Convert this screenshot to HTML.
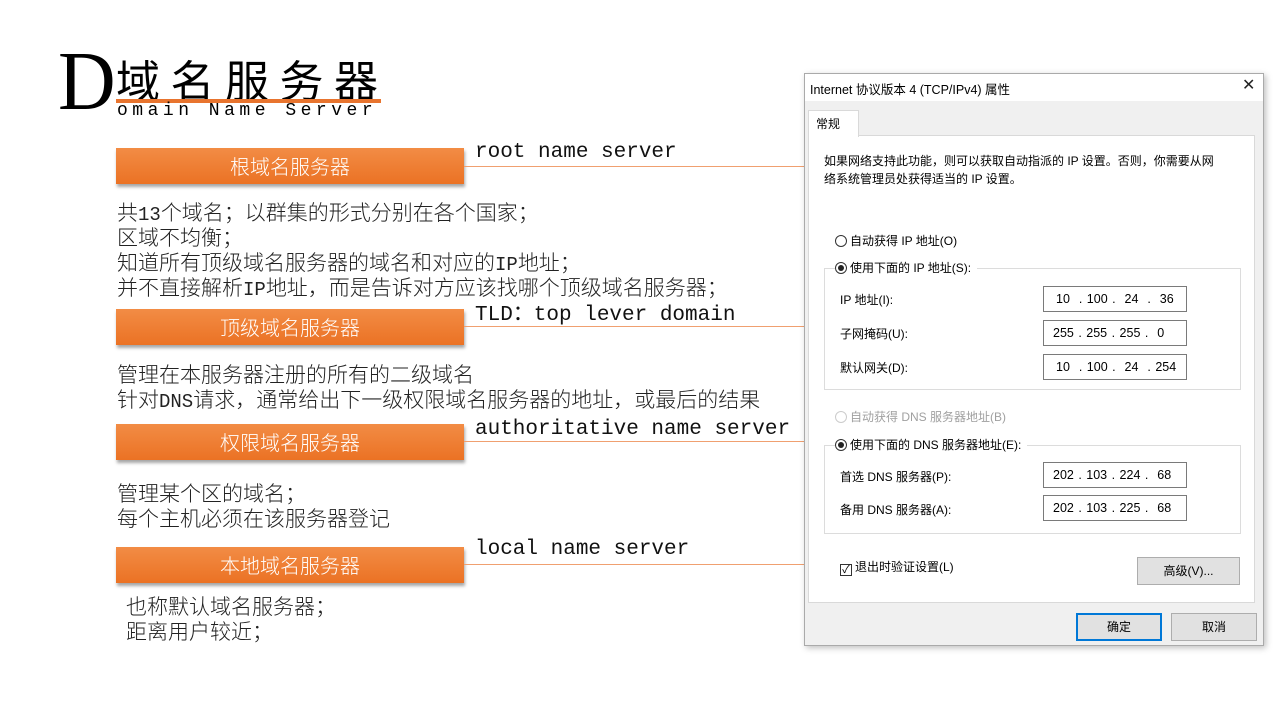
<!DOCTYPE html>
<html><head><meta charset="utf-8"><style>
*{margin:0;padding:0;box-sizing:border-box}
body{width:1280px;height:720px;background:#fff;position:relative;overflow:hidden;font-family:"Liberation Sans","Noto Sans CJK SC",sans-serif}
.a{position:absolute;white-space:nowrap}
.box{position:absolute;left:116px;width:348px;height:36px;background:linear-gradient(#f28c45,#eb7224);color:#fff;font-size:20px;line-height:36px;text-align:center;box-shadow:1px 3px 3px rgba(0,0,0,.35);font-family:"Noto Sans CJK SC",sans-serif;font-weight:300}
.lab{position:absolute;left:475px;font-family:"Liberation Mono","Noto Sans CJK SC",monospace;font-size:21px;line-height:22px;height:22px;color:#111;white-space:nowrap}
.ln{position:absolute;left:464px;width:340px;height:1px;background:#f0a070}
.t{position:absolute;left:117px;font-size:21px;color:#222;font-family:"Noto Sans CJK SC",sans-serif;font-weight:300;white-space:nowrap}
.t div{height:25px;line-height:25px;overflow:visible}
.m{font-family:"Liberation Mono",monospace;font-size:19px;line-height:1}
.d{font-size:12px;color:#000;font-family:"Liberation Sans","Noto Sans CJK SC",sans-serif}
.in{position:absolute;left:1043px;width:144px;height:26px;border:1px solid #7a7a7a;background:#fff;font-size:12.5px;line-height:24px;padding-left:12px;word-spacing:1px}
.rb{display:inline-block;width:12px;height:12px;border:1px solid #333;border-radius:50%;vertical-align:-2px;margin-right:3px;background:#fff;position:relative}
.rb.on::after{content:"";position:absolute;left:2px;top:2px;width:6px;height:6px;border-radius:50%;background:#222}
.gb{position:absolute;border:1px solid #dcdcdc}
.btn{position:absolute;height:28px;background:#e1e1e1;border:1px solid #adadad;font-size:12px;text-align:center;line-height:26px}
</style></head><body>
<div class="a" style="left:58px;top:40px;font-family:'Liberation Serif',serif;font-size:84px;line-height:84px;color:#000;transform:scaleX(0.95);transform-origin:left">D</div>
<div class="a" style="left:116px;top:54px;font-size:44px;line-height:48px;letter-spacing:10.5px;font-family:'Noto Sans CJK SC',sans-serif;color:#000">域名服务器</div>
<div class="a" style="left:116px;top:99px;width:265px;height:4px;background:#e8742e"></div>
<div class="a" style="left:117px;top:101px;font-family:'Liberation Mono',monospace;font-size:18px;letter-spacing:4.5px;color:#000">omain Name Server</div>

<div class="box" style="top:148px">根域名服务器</div>
<div class="lab" style="top:142px">root name server</div>
<div class="ln" style="top:166px"></div>
<div class="t" style="top:200px"><div>共<span class="m">13</span>个域名；以群集的形式分别在各个国家；</div><div>区域不均衡；</div><div>知道所有顶级域名服务器的域名和对应的<span class="m">IP</span>地址；</div><div>并不直接解析<span class="m">IP</span>地址，而是告诉对方应该找哪个顶级域名服务器；</div></div>

<div class="box" style="top:309px">顶级域名服务器</div>
<div class="lab" style="top:305px">TLD：top lever domain</div>
<div class="ln" style="top:326px"></div>
<div class="t" style="top:362px"><div>管理在本服务器注册的所有的二级域名</div><div>针对<span class="m">DNS</span>请求，通常给出下一级权限域名服务器的地址，或最后的结果</div></div>

<div class="box" style="top:424px">权限域名服务器</div>
<div class="lab" style="top:419px">authoritative name server</div>
<div class="ln" style="top:441px"></div>
<div class="t" style="top:481px"><div>管理某个区的域名；</div><div>每个主机必须在该服务器登记</div></div>

<div class="box" style="top:547px">本地域名服务器</div>
<div class="lab" style="top:539px">local name server</div>
<div class="ln" style="top:564px"></div>
<div class="t" style="top:594px;left:126px"><div>也称默认域名服务器；</div><div>距离用户较近；</div></div>

<div class="a" style="left:804px;top:73px;width:460px;height:573px;background:#f0f0f0;border:1px solid #aaa;box-shadow:2px 2px 6px rgba(0,0,0,.25)"></div>
<div class="a" style="left:805px;top:74px;width:458px;height:27px;background:#fff"></div>
<div class="a d" style="left:810px;top:79px;font-size:12.5px">Internet 协议版本 4 (TCP/IPv4) 属性</div>
<div class="a" style="left:1242px;top:77px;font-size:16px;line-height:18px;color:#222">✕</div>
<div class="a" style="left:808px;top:135px;width:447px;height:468px;background:#fff;border:1px solid #d9d9d9"></div>
<div class="a" style="left:808px;top:110px;width:51px;height:27px;background:#fff;border:1px solid #d9d9d9;border-bottom:none"></div>
<div class="a d" style="left:816px;top:115px">常规</div>
<div class="a d" style="left:824px;top:152px;line-height:18px">如果网络支持此功能，则可以获取自动指派的 IP 设置。否则，你需要从网<br>络系统管理员处获得适当的 IP 设置。</div>

<div class="gb" style="left:824px;top:268px;width:417px;height:122px"></div>
<div class="a d" style="left:835px;top:232px"><span class="rb"></span>自动获得 IP 地址(O)</div>
<div class="a d" style="left:835px;top:259px;background:#fff;padding-right:6px"><span class="rb on"></span>使用下面的 IP 地址(S):</div>
<div class="a d" style="left:840px;top:291px">IP 地址(I):</div>
<div class="a d" style="left:840px;top:325px">子网掩码(U):</div>
<div class="a d" style="left:840px;top:359px">默认网关(D):</div>
<div class="in" style="top:286px">10 &nbsp;. 100 . &nbsp;24 &nbsp;. &nbsp;36</div>
<div class="in" style="top:320px;padding-left:9px">255 . 255 . 255 . &nbsp;0</div>
<div class="in" style="top:354px">10 &nbsp;. 100 . &nbsp;24 &nbsp;. 254</div>

<div class="a d" style="left:835px;top:408px;color:#a0a0a0"><span class="rb" style="border-color:#ccc"></span>自动获得 DNS 服务器地址(B)</div>
<div class="gb" style="left:824px;top:445px;width:417px;height:89px"></div>
<div class="a d" style="left:835px;top:436px;background:#fff;padding-right:6px"><span class="rb on"></span>使用下面的 DNS 服务器地址(E):</div>
<div class="a d" style="left:840px;top:468px">首选 DNS 服务器(P):</div>
<div class="a d" style="left:840px;top:501px">备用 DNS 服务器(A):</div>
<div class="in" style="top:462px;padding-left:9px">202 . 103 . 224 . &nbsp;68</div>
<div class="in" style="top:495px;padding-left:9px">202 . 103 . 225 . &nbsp;68</div>

<div class="a d" style="left:840px;top:558px"><span style="display:inline-block;width:12px;height:12px;border:1px solid #333;vertical-align:-2px;margin-right:3px;font-size:11px;line-height:10px;text-align:center">✓</span>退出时验证设置(L)</div>
<div class="btn" style="left:1137px;top:557px;width:103px">高级(V)...</div>
<div class="btn" style="left:1076px;top:613px;width:86px;border:2px solid #0078d7;line-height:24px">确定</div>
<div class="btn" style="left:1171px;top:613px;width:86px">取消</div>
</body></html>
